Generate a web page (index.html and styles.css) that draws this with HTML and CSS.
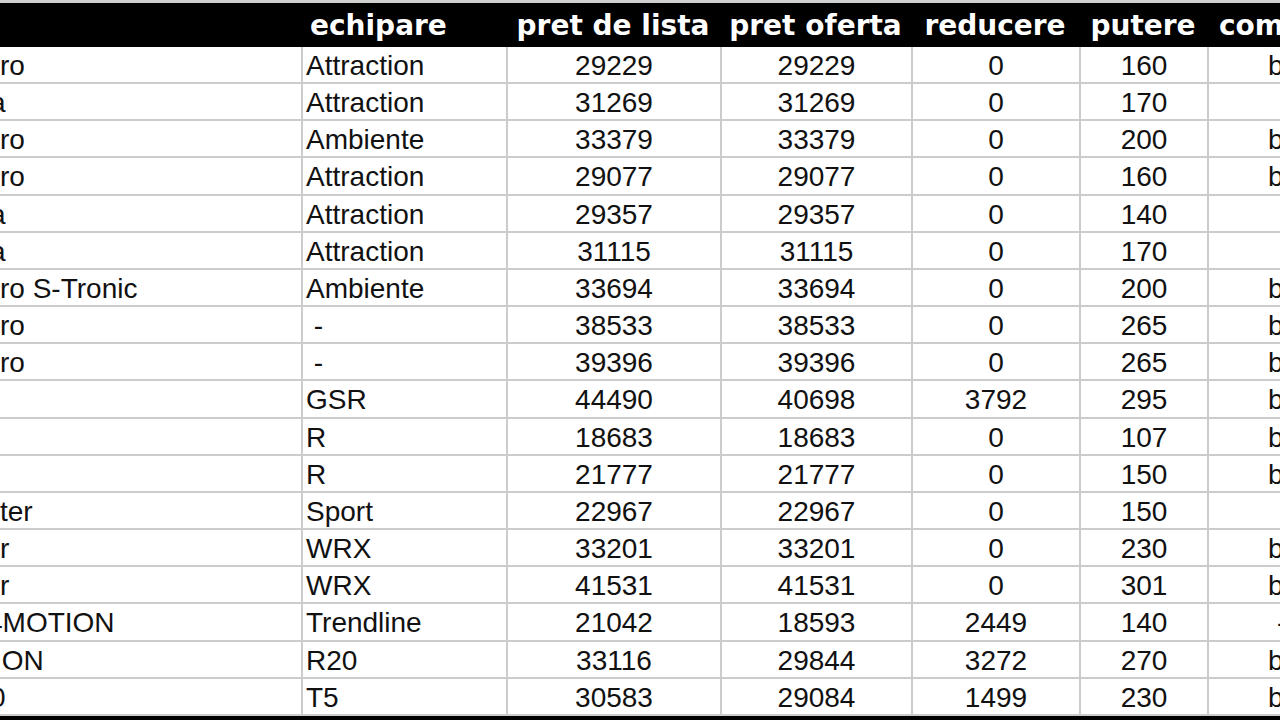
FILE: index.html
```html
<!DOCTYPE html>
<html>
<head>
<meta charset="utf-8">
<link rel="stylesheet" href="styles.css">
</head>
<body>
<div class="sheet">
  <div class="topstrip"></div>
  <div class="head">
    <div class="h c1"></div>
    <div class="h c2 left">echipare</div>
    <div class="h">pret de lista</div>
    <div class="h">pret oferta</div>
    <div class="h">reducere</div>
    <div class="h">putere</div>
    <div class="h c7 left">combustibil</div>
  </div>
  <div class="grid">
    <div class="d c1">ro</div><div class="d c2">Attraction</div><div class="d">29229</div><div class="d">29229</div><div class="d">0</div><div class="d">160</div><div class="d c7">benzina</div>
    <div class="d c1"><span class="cut">a</span></div><div class="d c2">Attraction</div><div class="d">31269</div><div class="d">31269</div><div class="d">0</div><div class="d">170</div><div class="d c7"></div>
    <div class="d c1">ro</div><div class="d c2">Ambiente</div><div class="d">33379</div><div class="d">33379</div><div class="d">0</div><div class="d">200</div><div class="d c7">benzina</div>
    <div class="d c1">ro</div><div class="d c2">Attraction</div><div class="d">29077</div><div class="d">29077</div><div class="d">0</div><div class="d">160</div><div class="d c7">benzina</div>
    <div class="d c1"><span class="cut">a</span></div><div class="d c2">Attraction</div><div class="d">29357</div><div class="d">29357</div><div class="d">0</div><div class="d">140</div><div class="d c7"></div>
    <div class="d c1"><span class="cut">a</span></div><div class="d c2">Attraction</div><div class="d">31115</div><div class="d">31115</div><div class="d">0</div><div class="d">170</div><div class="d c7"></div>
    <div class="d c1">ro S-Tronic</div><div class="d c2">Ambiente</div><div class="d">33694</div><div class="d">33694</div><div class="d">0</div><div class="d">200</div><div class="d c7">benzina</div>
    <div class="d c1">ro</div><div class="d c2">&nbsp;-</div><div class="d">38533</div><div class="d">38533</div><div class="d">0</div><div class="d">265</div><div class="d c7">benzina</div>
    <div class="d c1">ro</div><div class="d c2">&nbsp;-</div><div class="d">39396</div><div class="d">39396</div><div class="d">0</div><div class="d">265</div><div class="d c7">benzina</div>
    <div class="d c1"></div><div class="d c2">GSR</div><div class="d">44490</div><div class="d">40698</div><div class="d">3792</div><div class="d">295</div><div class="d c7">benzina</div>
    <div class="d c1"></div><div class="d c2">R</div><div class="d">18683</div><div class="d">18683</div><div class="d">0</div><div class="d">107</div><div class="d c7">benzina</div>
    <div class="d c1"></div><div class="d c2">R</div><div class="d">21777</div><div class="d">21777</div><div class="d">0</div><div class="d">150</div><div class="d c7">benzina</div>
    <div class="d c1">ter</div><div class="d c2">Sport</div><div class="d">22967</div><div class="d">22967</div><div class="d">0</div><div class="d">150</div><div class="d c7"></div>
    <div class="d c1">r</div><div class="d c2">WRX</div><div class="d">33201</div><div class="d">33201</div><div class="d">0</div><div class="d">230</div><div class="d c7">benzina</div>
    <div class="d c1">r</div><div class="d c2">WRX</div><div class="d">41531</div><div class="d">41531</div><div class="d">0</div><div class="d">301</div><div class="d c7">benzina</div>
    <div class="d c1"><span class="cut4">4</span>MOTION</div><div class="d c2">Trendline</div><div class="d">21042</div><div class="d">18593</div><div class="d">2449</div><div class="d">140</div><div class="d c7"><span class="far">-</span></div>
    <div class="d c1"><span class="cuti">I</span>ON</div><div class="d c2">R20</div><div class="d">33116</div><div class="d">29844</div><div class="d">3272</div><div class="d">270</div><div class="d c7">benzina</div>
    <div class="d c1"><span class="cut0">0</span></div><div class="d c2">T5</div><div class="d">30583</div><div class="d">29084</div><div class="d">1499</div><div class="d">230</div><div class="d c7">benzina</div>
  </div>
  <div class="bottomstrip"></div>
</div>
</body>
</html>
```
FILE: styles.css
```css
html, body {
  margin: 0;
  padding: 0;
  background: #ffffff;
  overflow: hidden;
}
.sheet {
  width: 1280px;
  height: 720px;
  display: flex;
  flex-direction: column;
  overflow: hidden;
}
.topstrip {
  height: 3px;
  background: #cfcfcf;
  flex: none;
}
.head {
  height: 44px;
  flex: none;
  background: #000;
  display: grid;
  grid-template-columns: 301px 205px 214px 191px 168px 128px 73px;
}
.h {
  color: #fff;
  font-family: "DejaVu Sans", sans-serif;
  font-weight: bold;
  font-size: 28px;
  line-height: 45px;
  text-align: center;
  white-space: nowrap;
  overflow: hidden;
}
.h.left {
  text-align: left;
}
.h.c2 {
  padding-left: 9px;
}
.h.c7 {
  padding-left: 12px;
}
.grid {
  height: 669px;
  flex: none;
  display: grid;
  grid-template-columns: 301px 205px 214px 191px 168px 128px 73px;
  grid-auto-rows: 37.1667px;
}
.d {
  box-sizing: border-box;
  border-bottom: 2px solid #cccccc;
  border-left: 2px solid #cccccc;
  font-family: "Liberation Sans", Arial, sans-serif;
  font-size: 28px;
  color: #111;
  line-height: 38px;
  text-align: center;
  white-space: nowrap;
  overflow: hidden;
}
.d.c1 {
  border-left: none;
  text-align: left;
}
.d.c2 {
  text-align: left;
  padding-left: 3px;
}
.d.c7 {
  text-align: left;
  padding-left: 59px;
}
.cut {
  display: inline-block;
  margin-left: -10px;
}
.cut4 {
  display: inline-block;
  margin-left: -13px;
}
.cuti {
  display: inline-block;
  margin-left: -6px;
}
.cut0 {
  display: inline-block;
  margin-left: -10px;
}
.far {
  display: inline-block;
  margin-left: 9px;
}
.bottomstrip {
  flex: 1;
  background: #000;
}
```
